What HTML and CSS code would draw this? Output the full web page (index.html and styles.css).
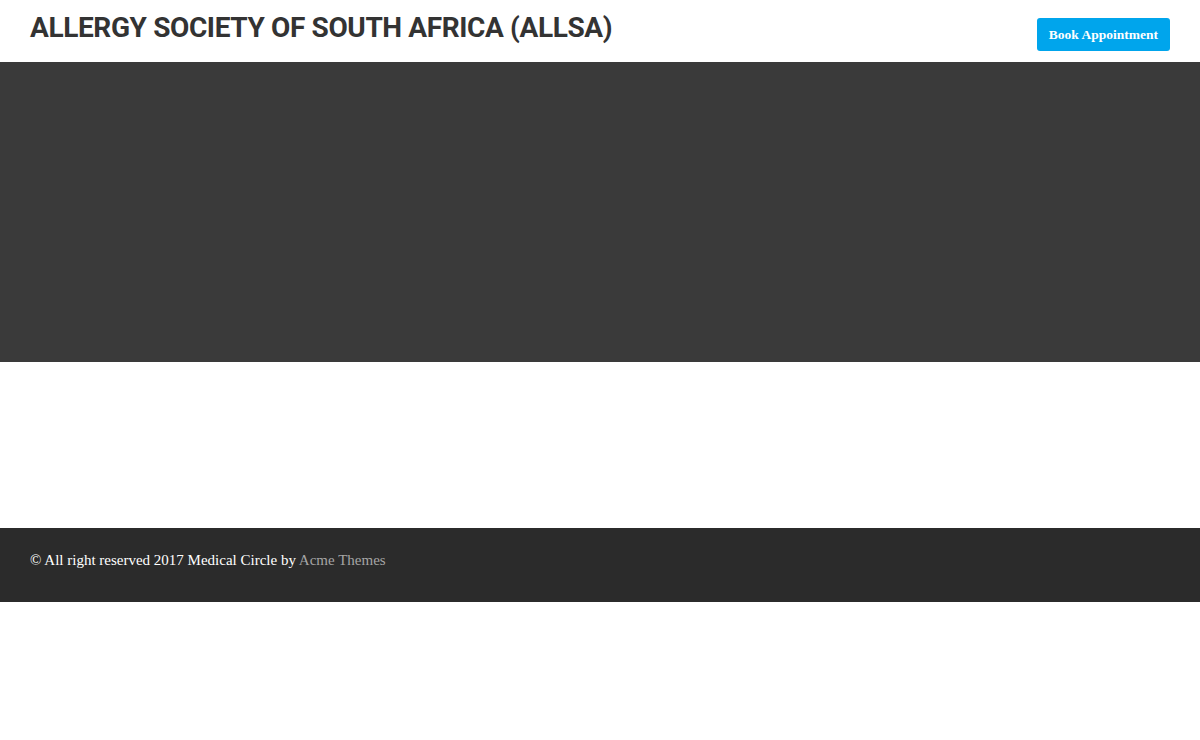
FILE: index.html
```html
<!DOCTYPE html>
<html>
<head>
<meta charset="utf-8">
<link rel="stylesheet" href="styles.css">
</head>
<body>
<header class="site-header">
  <h1 class="site-title">ALLERGY SOCIETY OF SOUTH AFRICA (ALLSA)</h1>
  <a class="btn-book" href="#">Book Appointment</a>
</header>
<section class="hero"></section>
<main class="content"></main>
<footer class="site-footer">
  <p class="copyright">© All right reserved 2017 Medical Circle by <a href="#">Acme Themes</a></p>
</footer>
</body>
</html>
```
FILE: styles.css
```css
html, body { margin: 0; padding: 0; background: #fff; }
body { font-family: "Liberation Serif", serif; }
.site-header {
  height: 62px;
  box-sizing: border-box;
  display: flex;
  align-items: center;
  justify-content: space-between;
  padding: 0 30px;
}
.site-title {
  margin: 0;
  font-family: Roboto, "Noto Sans", sans-serif;
  font-weight: 700;
  font-size: 28px;
  color: #333;
  letter-spacing: -0.38px;
  position: relative;
  top: -4px;
}
.btn-book {
  display: block;
  background: #00a5ec;
  color: #fff;
  text-decoration: none;
  font-family: "Liberation Serif", serif;
  font-weight: 700;
  font-size: 13.5px;
  height: 33px;
  line-height: 33px;
  padding: 0 12px;
  border-radius: 3px;
  position: relative;
  top: 3px;
}
.hero { height: 300px; background: #3a3a3a; }
.content { height: 166px; }
.site-footer {
  height: 74px;
  box-sizing: border-box;
  background: #2b2b2b;
  display: flex;
  align-items: center;
  padding: 0 30px 10px;
}
.copyright { margin: 0; color: #fff; font-size: 15px; }
.copyright a { color: #a5a5a5; text-decoration: none; }
```
